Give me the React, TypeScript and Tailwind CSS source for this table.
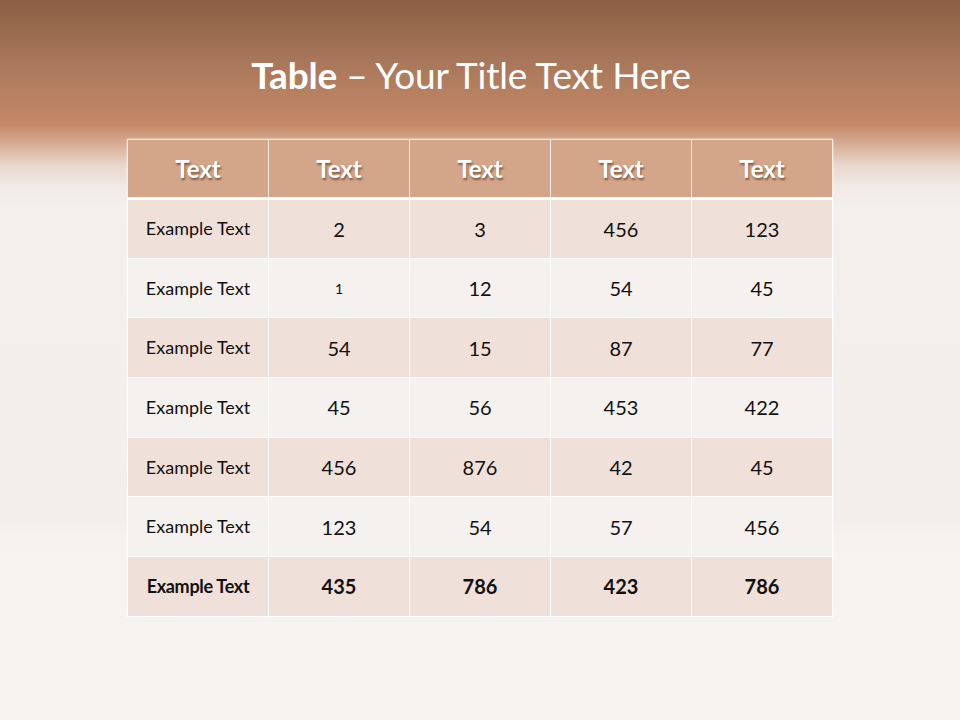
const rows: { label: string; values: string[]; bold?: boolean }[] = [
  { label: "Example Text", values: ["2", "3", "456", "123"] },
  { label: "Example Text", values: ["1", "12", "54", "45"] },
  { label: "Example Text", values: ["54", "15", "87", "77"] },
  { label: "Example Text", values: ["45", "56", "453", "422"] },
  { label: "Example Text", values: ["456", "876", "42", "45"] },
  { label: "Example Text", values: ["123", "54", "57", "456"] },
  { label: "Example Text", values: ["435", "786", "423", "786"], bold: true },
];

const App = () => {
  return (
    <div className="w-[960px] h-[720px] overflow-hidden font-['Lato','Open_Sans',sans-serif] bg-[linear-gradient(to_bottom,#8a5f43_0px,#a8765a_60px,#c48a68_125px,#d8ae96_145px,#e9d6cb_165px,#f0e9e5_185px,#f2efed_205px,#f1eeec_520px,#f5f2f0_540px,#f6f3f1_720px)] flex flex-col items-center">
      <h1 className="mt-[53px] h-[44px] text-white text-[37px] leading-[44px] tracking-[-0.2px] pr-[18px]">
        <span className="font-bold">Table</span> – Your Title Text Here
      </h1>
      <table className="mt-[42px] w-[704px] border-collapse table-fixed shadow-[0_0_2px_rgba(255,255,255,0.8)]">
        <thead>
          <tr className="h-[59px] bg-[#d3a589]">
            {["Text", "Text", "Text", "Text", "Text"].map((t, i) => (
              <th
                key={i}
                className="w-[141px] border border-[#f6ece6] border-b-[3px] border-b-white text-white text-[24px] font-bold text-center [text-shadow:1px_2px_2px_rgba(60,30,10,0.55)]"
              >
                {t}
              </th>
            ))}
          </tr>
        </thead>
        <tbody>
          {rows.map((r, i) => (
            <tr
              key={i}
              className={`h-[59.7px] ${i % 2 === 0 ? "bg-[#efe0d9]" : "bg-[#f5f1ee]"}`}
            >
              <td
                className={`border border-white text-center text-[18px] text-[#111] ${r.bold ? "font-bold tracking-[-0.3px]" : ""}`}
              >
                {r.label}
              </td>
              {r.values.map((v, j) => (
                <td
                  key={j}
                  className={`border border-white text-center text-[#111] ${r.bold ? "font-bold" : ""} ${i === 1 && j === 0 ? "text-[14px]" : "text-[20px]"}`}
                >
                  {v}
                </td>
              ))}
            </tr>
          ))}
        </tbody>
      </table>
    </div>
  );
};

export default App;
